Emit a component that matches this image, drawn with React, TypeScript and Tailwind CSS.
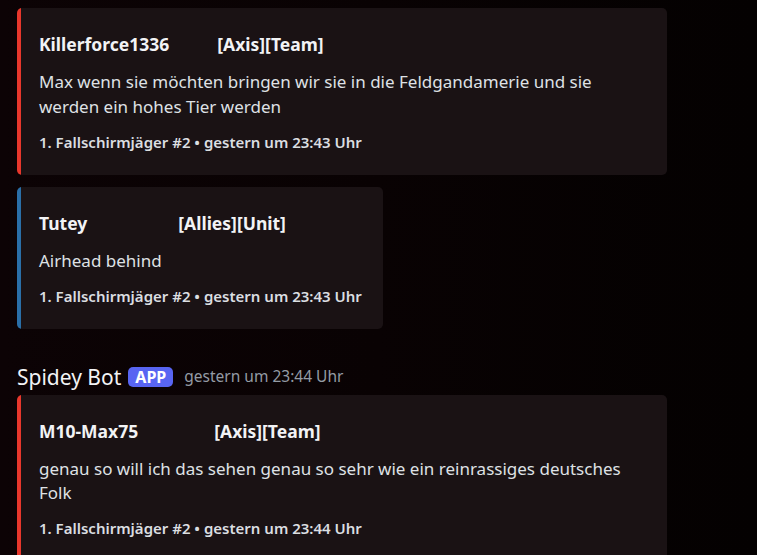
import React from "react";

type Card = {
  name: string;
  tag: string;
  tagMl: string;
  body: string;
  footer: string;
  border: string;
  width: string;
};

function Embed({ c }: { c: Card }) {
  return (
    <div
      className={`flex ${c.width} rounded-[5px] bg-[#1a1214] overflow-hidden`}
    >
      <div className={`w-[4px] shrink-0 ${c.border}`} />
      <div className="flex flex-col pl-[18px] pr-[20px] pt-[26px] pb-[24px]">
        <div className="flex h-[20px] items-center text-[17.5px] font-bold leading-[20px] text-[#f2f3f5]">
          <span>{c.name}</span>
          <span className={c.tagMl}>{c.tag}</span>
        </div>
        <div className="mt-[16px] text-[17px] leading-[24.5px] text-[#dfe1e5]">
          {c.body}
        </div>
        <div className="mt-[13.5px] whitespace-nowrap text-[15px] font-semibold leading-[18px] text-[#dbdee1]">
          {c.footer}
        </div>
      </div>
    </div>
  );
}

export default function App() {
  const c1: Card = {
    name: "Killerforce1336",
    tag: "[Axis][Team]",
    tagMl: "ml-[48px]",
    body: "Max wenn sie möchten bringen wir sie in die Feldgandamerie und sie werden ein hohes Tier werden",
    footer: "1. Fallschirmjäger #2 • gestern um 23:43 Uhr",
    border: "bg-[#e8372c]",
    width: "w-[650px]",
  };
  const c2: Card = {
    name: "Tutey",
    tag: "[Allies][Unit]",
    tagMl: "ml-[91px]",
    body: "Airhead behind",
    footer: "1. Fallschirmjäger #2 • gestern um 23:43 Uhr",
    border: "bg-[#2a6fa8]",
    width: "w-[366px]",
  };
  const c3: Card = {
    name: "M10-Max75",
    tag: "[Axis][Team]",
    tagMl: "ml-[76px]",
    body: "genau so will ich das sehen genau so sehr wie ein reinrassiges deutsches Folk",
    footer: "1. Fallschirmjäger #2 • gestern um 23:44 Uhr",
    border: "bg-[#e8372c]",
    width: "w-[650px]",
  };
  return (
    <div
      className="h-[555px] w-[757px] overflow-hidden bg-gradient-to-r from-[#0c0305] via-[#090203] to-[#040101] pl-[17px] pt-[8px]"
      style={{ fontFamily: '"Noto Sans", "Open Sans", sans-serif' }}
    >
      <div className="flex flex-col gap-[12px]">
        <Embed c={c1} />
        <Embed c={c2} />
      </div>
      <div className="mt-[35px] flex h-[26px] items-center">
        <span className="text-[21px] leading-[26px] text-[#f2f3f5]">
          Spidey Bot
        </span>
        <span className="ml-[7px] flex h-[20px] items-center rounded-[5px] bg-[#5865f2] px-[7px] text-[16px] font-bold text-white">
          APP
        </span>
        <span className="ml-[11px] text-[15.5px] text-[#949ba4]">
          gestern um 23:44 Uhr
        </span>
      </div>
      <div className="mt-[5px]">
        <Embed c={c3} />
      </div>
    </div>
  );
}
